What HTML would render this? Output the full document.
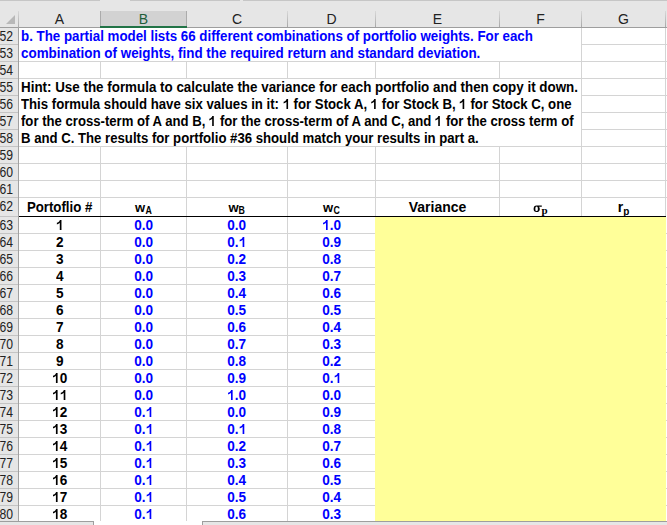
<!DOCTYPE html><html><head><meta charset="utf-8"><style>
html,body{margin:0;padding:0}
body{width:667px;height:525px;overflow:hidden;position:relative;background:#fff;font-family:'Liberation Sans', sans-serif}
.a{position:absolute}
.t{position:absolute;white-space:nowrap;font-weight:bold;font-size:14px;line-height:17px}
.c{text-align:center}
.bl{color:#0000ff}
.hd{position:absolute;font-size:14px;line-height:17px;color:#222;text-align:center}
.rh{position:absolute;font-size:14px;line-height:17px;color:#222;text-align:right}
</style></head><body>

<div class="a" style="left:0;top:0;width:667px;height:28px;background:#e6e6e6"></div>
<div class="a" style="left:0;top:0;width:667px;height:1px;background:#c6c6c6"></div>
<div class="a" style="left:100px;top:0;width:30px;height:1px;background:#e6e6e6"></div>
<div class="a" style="left:240px;top:0;width:3px;height:1px;background:#e6e6e6"></div>
<div class="a" style="left:0;top:28px;width:18px;height:497px;background:#e6e6e6"></div>
<div class="a" style="left:100px;top:11px;width:87px;height:15px;background:#d2d2d2;box-sizing:border-box;border-left:1px solid #ababab;border-right:1px solid #ababab"></div>
<div class="a" style="left:100px;top:26px;width:87px;height:2px;background:#217346"></div>
<div class="a" style="left:0;top:27px;width:100px;height:1px;background:#9e9e9e"></div>
<div class="a" style="left:187px;top:27px;width:480px;height:1px;background:#9e9e9e"></div>
<div class="a" style="left:287px;top:11px;width:1px;height:16px;background:linear-gradient(#d8d8d8,#a8a8a8)"></div>
<div class="a" style="left:375px;top:11px;width:1px;height:16px;background:linear-gradient(#d8d8d8,#a8a8a8)"></div>
<div class="a" style="left:499px;top:11px;width:1px;height:16px;background:linear-gradient(#d8d8d8,#a8a8a8)"></div>
<div class="a" style="left:581px;top:11px;width:1px;height:16px;background:linear-gradient(#d8d8d8,#a8a8a8)"></div>
<div class="a" style="left:665px;top:11px;width:1px;height:16px;background:linear-gradient(#d8d8d8,#a8a8a8)"></div>
<div class="a" style="left:18px;top:11px;width:1px;height:17px;background:linear-gradient(#d8d8d8,#a8a8a8)"></div>
<svg class="a" style="left:0;top:0" width="20" height="28"><polygon points="15,15 15,24 6,24" fill="#b8b8b8"/></svg>
<div class="hd" style="left:19px;top:11px;width:81px;color:#222">A</div>
<div class="hd" style="left:101px;top:11px;width:85px;color:#1e5e3a">B</div>
<div class="hd" style="left:187px;top:11px;width:100px;color:#222">C</div>
<div class="hd" style="left:288px;top:11px;width:87px;color:#222">D</div>
<div class="hd" style="left:376px;top:11px;width:123px;color:#222">E</div>
<div class="hd" style="left:500px;top:11px;width:81px;color:#222">F</div>
<div class="hd" style="left:582px;top:11px;width:83px;color:#222">G</div>
<div class="a" style="left:18px;top:28px;width:1px;height:497px;background:#a0a0a0"></div>
<div class="a" style="left:0;top:44px;width:18px;height:1px;background:#c4c4c4"></div>
<div class="rh" style="left:-21px;top:28px;width:34px;height:17px;transform:scaleX(0.87);transform-origin:right">52</div>
<div class="a" style="left:0;top:61px;width:18px;height:1px;background:#c4c4c4"></div>
<div class="rh" style="left:-21px;top:45px;width:34px;height:17px;transform:scaleX(0.87);transform-origin:right">53</div>
<div class="a" style="left:0;top:78px;width:18px;height:1px;background:#c4c4c4"></div>
<div class="rh" style="left:-21px;top:62px;width:34px;height:17px;transform:scaleX(0.87);transform-origin:right">54</div>
<div class="a" style="left:0;top:95px;width:18px;height:1px;background:#c4c4c4"></div>
<div class="rh" style="left:-21px;top:79px;width:34px;height:17px;transform:scaleX(0.87);transform-origin:right">55</div>
<div class="a" style="left:0;top:112px;width:18px;height:1px;background:#c4c4c4"></div>
<div class="rh" style="left:-21px;top:96px;width:34px;height:17px;transform:scaleX(0.87);transform-origin:right">56</div>
<div class="a" style="left:0;top:129px;width:18px;height:1px;background:#c4c4c4"></div>
<div class="rh" style="left:-21px;top:113px;width:34px;height:17px;transform:scaleX(0.87);transform-origin:right">57</div>
<div class="a" style="left:0;top:146px;width:18px;height:1px;background:#c4c4c4"></div>
<div class="rh" style="left:-21px;top:130px;width:34px;height:17px;transform:scaleX(0.87);transform-origin:right">58</div>
<div class="a" style="left:0;top:163px;width:18px;height:1px;background:#c4c4c4"></div>
<div class="rh" style="left:-21px;top:147px;width:34px;height:17px;transform:scaleX(0.87);transform-origin:right">59</div>
<div class="a" style="left:0;top:180px;width:18px;height:1px;background:#c4c4c4"></div>
<div class="rh" style="left:-21px;top:164px;width:34px;height:17px;transform:scaleX(0.87);transform-origin:right">60</div>
<div class="a" style="left:0;top:197px;width:18px;height:1px;background:#c4c4c4"></div>
<div class="rh" style="left:-21px;top:181px;width:34px;height:17px;transform:scaleX(0.87);transform-origin:right">61</div>
<div class="a" style="left:0;top:216px;width:18px;height:1px;background:#c4c4c4"></div>
<div class="rh" style="left:-21px;top:198px;width:34px;height:17px;transform:scaleX(0.87);transform-origin:right">62</div>
<div class="a" style="left:0;top:233px;width:18px;height:1px;background:#c4c4c4"></div>
<div class="rh" style="left:-21px;top:217px;width:34px;height:17px;transform:scaleX(0.87);transform-origin:right">63</div>
<div class="a" style="left:0;top:250px;width:18px;height:1px;background:#c4c4c4"></div>
<div class="rh" style="left:-21px;top:234px;width:34px;height:17px;transform:scaleX(0.87);transform-origin:right">64</div>
<div class="a" style="left:0;top:267px;width:18px;height:1px;background:#c4c4c4"></div>
<div class="rh" style="left:-21px;top:251px;width:34px;height:17px;transform:scaleX(0.87);transform-origin:right">65</div>
<div class="a" style="left:0;top:284px;width:18px;height:1px;background:#c4c4c4"></div>
<div class="rh" style="left:-21px;top:268px;width:34px;height:17px;transform:scaleX(0.87);transform-origin:right">66</div>
<div class="a" style="left:0;top:301px;width:18px;height:1px;background:#c4c4c4"></div>
<div class="rh" style="left:-21px;top:285px;width:34px;height:17px;transform:scaleX(0.87);transform-origin:right">67</div>
<div class="a" style="left:0;top:318px;width:18px;height:1px;background:#c4c4c4"></div>
<div class="rh" style="left:-21px;top:302px;width:34px;height:17px;transform:scaleX(0.87);transform-origin:right">68</div>
<div class="a" style="left:0;top:335px;width:18px;height:1px;background:#c4c4c4"></div>
<div class="rh" style="left:-21px;top:319px;width:34px;height:17px;transform:scaleX(0.87);transform-origin:right">69</div>
<div class="a" style="left:0;top:352px;width:18px;height:1px;background:#c4c4c4"></div>
<div class="rh" style="left:-21px;top:336px;width:34px;height:17px;transform:scaleX(0.87);transform-origin:right">70</div>
<div class="a" style="left:0;top:369px;width:18px;height:1px;background:#c4c4c4"></div>
<div class="rh" style="left:-21px;top:353px;width:34px;height:17px;transform:scaleX(0.87);transform-origin:right">71</div>
<div class="a" style="left:0;top:386px;width:18px;height:1px;background:#c4c4c4"></div>
<div class="rh" style="left:-21px;top:370px;width:34px;height:17px;transform:scaleX(0.87);transform-origin:right">72</div>
<div class="a" style="left:0;top:403px;width:18px;height:1px;background:#c4c4c4"></div>
<div class="rh" style="left:-21px;top:387px;width:34px;height:17px;transform:scaleX(0.87);transform-origin:right">73</div>
<div class="a" style="left:0;top:420px;width:18px;height:1px;background:#c4c4c4"></div>
<div class="rh" style="left:-21px;top:404px;width:34px;height:17px;transform:scaleX(0.87);transform-origin:right">74</div>
<div class="a" style="left:0;top:437px;width:18px;height:1px;background:#c4c4c4"></div>
<div class="rh" style="left:-21px;top:421px;width:34px;height:17px;transform:scaleX(0.87);transform-origin:right">75</div>
<div class="a" style="left:0;top:454px;width:18px;height:1px;background:#c4c4c4"></div>
<div class="rh" style="left:-21px;top:438px;width:34px;height:17px;transform:scaleX(0.87);transform-origin:right">76</div>
<div class="a" style="left:0;top:471px;width:18px;height:1px;background:#c4c4c4"></div>
<div class="rh" style="left:-21px;top:455px;width:34px;height:17px;transform:scaleX(0.87);transform-origin:right">77</div>
<div class="a" style="left:0;top:488px;width:18px;height:1px;background:#c4c4c4"></div>
<div class="rh" style="left:-21px;top:472px;width:34px;height:17px;transform:scaleX(0.87);transform-origin:right">78</div>
<div class="a" style="left:0;top:505px;width:18px;height:1px;background:#c4c4c4"></div>
<div class="rh" style="left:-21px;top:489px;width:34px;height:17px;transform:scaleX(0.87);transform-origin:right">79</div>
<div class="a" style="left:0;top:522px;width:18px;height:1px;background:#c4c4c4"></div>
<div class="rh" style="left:-21px;top:506px;width:34px;height:17px;transform:scaleX(0.87);transform-origin:right">80</div>
<div class="a" style="left:581px;top:44px;width:86px;height:1px;background:#d4d4d4"></div>
<div class="a" style="left:19px;top:61px;width:648px;height:1px;background:#d4d4d4"></div>
<div class="a" style="left:19px;top:78px;width:648px;height:1px;background:#d4d4d4"></div>
<div class="a" style="left:581px;top:95px;width:86px;height:1px;background:#d4d4d4"></div>
<div class="a" style="left:581px;top:112px;width:86px;height:1px;background:#d4d4d4"></div>
<div class="a" style="left:581px;top:129px;width:86px;height:1px;background:#d4d4d4"></div>
<div class="a" style="left:19px;top:146px;width:648px;height:1px;background:#d4d4d4"></div>
<div class="a" style="left:19px;top:163px;width:648px;height:1px;background:#d4d4d4"></div>
<div class="a" style="left:19px;top:180px;width:648px;height:1px;background:#d4d4d4"></div>
<div class="a" style="left:19px;top:197px;width:648px;height:1px;background:#d4d4d4"></div>
<div class="a" style="left:19px;top:233px;width:648px;height:1px;background:#d4d4d4"></div>
<div class="a" style="left:19px;top:250px;width:648px;height:1px;background:#d4d4d4"></div>
<div class="a" style="left:19px;top:267px;width:648px;height:1px;background:#d4d4d4"></div>
<div class="a" style="left:19px;top:284px;width:648px;height:1px;background:#d4d4d4"></div>
<div class="a" style="left:19px;top:301px;width:648px;height:1px;background:#d4d4d4"></div>
<div class="a" style="left:19px;top:318px;width:648px;height:1px;background:#d4d4d4"></div>
<div class="a" style="left:19px;top:335px;width:648px;height:1px;background:#d4d4d4"></div>
<div class="a" style="left:19px;top:352px;width:648px;height:1px;background:#d4d4d4"></div>
<div class="a" style="left:19px;top:369px;width:648px;height:1px;background:#d4d4d4"></div>
<div class="a" style="left:19px;top:386px;width:648px;height:1px;background:#d4d4d4"></div>
<div class="a" style="left:19px;top:403px;width:648px;height:1px;background:#d4d4d4"></div>
<div class="a" style="left:19px;top:420px;width:648px;height:1px;background:#d4d4d4"></div>
<div class="a" style="left:19px;top:437px;width:648px;height:1px;background:#d4d4d4"></div>
<div class="a" style="left:19px;top:454px;width:648px;height:1px;background:#d4d4d4"></div>
<div class="a" style="left:19px;top:471px;width:648px;height:1px;background:#d4d4d4"></div>
<div class="a" style="left:19px;top:488px;width:648px;height:1px;background:#d4d4d4"></div>
<div class="a" style="left:19px;top:505px;width:648px;height:1px;background:#d4d4d4"></div>
<div class="a" style="left:100px;top:61px;width:1px;height:18px;background:#d4d4d4"></div>
<div class="a" style="left:100px;top:146px;width:1px;height:375px;background:#d4d4d4"></div>
<div class="a" style="left:186px;top:61px;width:1px;height:18px;background:#d4d4d4"></div>
<div class="a" style="left:186px;top:146px;width:1px;height:375px;background:#d4d4d4"></div>
<div class="a" style="left:287px;top:61px;width:1px;height:18px;background:#d4d4d4"></div>
<div class="a" style="left:287px;top:146px;width:1px;height:375px;background:#d4d4d4"></div>
<div class="a" style="left:375px;top:61px;width:1px;height:18px;background:#d4d4d4"></div>
<div class="a" style="left:375px;top:146px;width:1px;height:375px;background:#d4d4d4"></div>
<div class="a" style="left:499px;top:61px;width:1px;height:18px;background:#d4d4d4"></div>
<div class="a" style="left:499px;top:146px;width:1px;height:375px;background:#d4d4d4"></div>
<div class="a" style="left:581px;top:28px;width:1px;height:493px;background:#d4d4d4"></div>
<div class="a" style="left:665px;top:28px;width:1px;height:493px;background:#d4d4d4"></div>
<div class="a" style="left:375px;top:217px;width:291px;height:304px;background:#ffff99"></div>
<div class="a" style="left:19px;top:216px;width:647px;height:1px;background:#000"></div>
<div class="t bl" style="left:21px;top:28px;"><span style="display:inline-block;transform:scaleX(0.951);transform-origin:left">b. The partial model lists 66 different combinations of portfolio weights. For each</span></div>
<div class="t bl" style="left:21px;top:45px;"><span style="display:inline-block;transform:scaleX(0.957);transform-origin:left">combination of weights, find the required return and standard deviation.</span></div>
<div class="t " style="left:21px;top:79px;"><span style="display:inline-block;transform:scaleX(0.956);transform-origin:left">Hint: Use the formula to calculate the variance for each portfolio and then copy it down.</span></div>
<div class="t " style="left:21px;top:96px;"><span style="display:inline-block;transform:scaleX(0.942);transform-origin:left">This formula should have six values in it: <svg style="display:inline-block;vertical-align:baseline" width="7.78" height="10.02" viewBox="0 0 1139 1466"><path d="M811 1466L557 1466L557 409L443 516L270 598L115 649L115 394L240 353L376 276L512 153L573 0L811 0Z" fill="currentColor"/></svg> for Stock A, <svg style="display:inline-block;vertical-align:baseline" width="7.78" height="10.02" viewBox="0 0 1139 1466"><path d="M811 1466L557 1466L557 409L443 516L270 598L115 649L115 394L240 353L376 276L512 153L573 0L811 0Z" fill="currentColor"/></svg> for Stock B, <svg style="display:inline-block;vertical-align:baseline" width="7.78" height="10.02" viewBox="0 0 1139 1466"><path d="M811 1466L557 1466L557 409L443 516L270 598L115 649L115 394L240 353L376 276L512 153L573 0L811 0Z" fill="currentColor"/></svg> for Stock C, one</span></div>
<div class="t " style="left:21px;top:113px;"><span style="display:inline-block;transform:scaleX(0.938);transform-origin:left">for the cross-term of A and B, <svg style="display:inline-block;vertical-align:baseline" width="7.78" height="10.02" viewBox="0 0 1139 1466"><path d="M811 1466L557 1466L557 409L443 516L270 598L115 649L115 394L240 353L376 276L512 153L573 0L811 0Z" fill="currentColor"/></svg> for the cross-term of A and C, and <svg style="display:inline-block;vertical-align:baseline" width="7.78" height="10.02" viewBox="0 0 1139 1466"><path d="M811 1466L557 1466L557 409L443 516L270 598L115 649L115 394L240 353L376 276L512 153L573 0L811 0Z" fill="currentColor"/></svg> for the cross term of</span></div>
<div class="t " style="left:21px;top:130px;"><span style="display:inline-block;transform:scaleX(0.94);transform-origin:left">B and C. The results for portfolio #36 should match your results in part a.</span></div>
<div class="t c" style="left:19px;top:199px;width:81px;"><span style="display:inline-block;transform:scaleX(0.945);transform-origin:center">Portoflio #</span></div>
<div class="t c" style="left:101px;top:199px;width:85px;"><span style="font-size:13px">w</span><span style="font-size:10px;position:relative;top:2px;display:inline-block;transform:scaleX(0.88);margin-left:-0.5px">A</span></div>
<div class="t c" style="left:187px;top:199px;width:100px;"><span style="font-size:13px">w</span><span style="font-size:10px;position:relative;top:2px;display:inline-block;transform:scaleX(0.88);margin-left:-0.5px">B</span></div>
<div class="t c" style="left:288px;top:199px;width:87px;"><span style="font-size:13px">w</span><span style="font-size:10px;position:relative;top:2px;display:inline-block;transform:scaleX(0.88);margin-left:-0.5px">C</span></div>
<div class="t c" style="left:376px;top:199px;width:123px;">Variance</div>
<div class="t c" style="left:500px;top:199px;width:81px;"><svg style="display:inline-block;vertical-align:baseline" width="9" height="7" viewBox="0 0 9 7"><path fill-rule="evenodd" d="M3.6 0.6 L8.8 0.6 L8.8 1.7 L5.9 1.7 Q6.8 2.5 6.8 3.9 Q6.8 7 3.5 7 Q0.6 7 0.6 4 Q0.6 0.6 3.6 0.6 Z M3.6 1.5 Q2.3 1.5 2.3 3.9 Q2.3 6.1 3.6 6.1 Q4.9 6.1 4.9 3.9 Q4.9 1.5 3.6 1.5 Z" fill="#000"/></svg><span style="font-family:'Liberation Serif',serif;font-size:11px;position:relative;top:1.5px;margin-left:-1px">p</span></div>
<div class="t c" style="left:582px;top:199px;width:83px;">r<span style="font-size:10px;position:relative;top:3px">p</span></div>
<div class="t c" style="left:19px;top:217px;width:81px;"><span style="display:inline-block;transform:scaleX(0.97);transform-origin:center"><svg style="display:inline-block;vertical-align:baseline" width="7.78" height="10.02" viewBox="0 0 1139 1466"><path d="M811 1466L557 1466L557 409L443 516L270 598L115 649L115 394L240 353L376 276L512 153L573 0L811 0Z" fill="currentColor"/></svg></span></div>
<div class="t c bl" style="left:101px;top:217px;width:85px;"><span style="display:inline-block;transform:scaleX(0.97);transform-origin:center">0.0</span></div>
<div class="t c bl" style="left:187px;top:217px;width:100px;"><span style="display:inline-block;transform:scaleX(0.97);transform-origin:center">0.0</span></div>
<div class="t c bl" style="left:288px;top:217px;width:87px;"><span style="display:inline-block;transform:scaleX(0.97);transform-origin:center"><svg style="display:inline-block;vertical-align:baseline" width="7.78" height="10.02" viewBox="0 0 1139 1466"><path d="M811 1466L557 1466L557 409L443 516L270 598L115 649L115 394L240 353L376 276L512 153L573 0L811 0Z" fill="currentColor"/></svg>.0</span></div>
<div class="t c" style="left:19px;top:234px;width:81px;"><span style="display:inline-block;transform:scaleX(0.97);transform-origin:center">2</span></div>
<div class="t c bl" style="left:101px;top:234px;width:85px;"><span style="display:inline-block;transform:scaleX(0.97);transform-origin:center">0.0</span></div>
<div class="t c bl" style="left:187px;top:234px;width:100px;"><span style="display:inline-block;transform:scaleX(0.97);transform-origin:center">0.<svg style="display:inline-block;vertical-align:baseline" width="7.78" height="10.02" viewBox="0 0 1139 1466"><path d="M811 1466L557 1466L557 409L443 516L270 598L115 649L115 394L240 353L376 276L512 153L573 0L811 0Z" fill="currentColor"/></svg></span></div>
<div class="t c bl" style="left:288px;top:234px;width:87px;"><span style="display:inline-block;transform:scaleX(0.97);transform-origin:center">0.9</span></div>
<div class="t c" style="left:19px;top:251px;width:81px;"><span style="display:inline-block;transform:scaleX(0.97);transform-origin:center">3</span></div>
<div class="t c bl" style="left:101px;top:251px;width:85px;"><span style="display:inline-block;transform:scaleX(0.97);transform-origin:center">0.0</span></div>
<div class="t c bl" style="left:187px;top:251px;width:100px;"><span style="display:inline-block;transform:scaleX(0.97);transform-origin:center">0.2</span></div>
<div class="t c bl" style="left:288px;top:251px;width:87px;"><span style="display:inline-block;transform:scaleX(0.97);transform-origin:center">0.8</span></div>
<div class="t c" style="left:19px;top:268px;width:81px;"><span style="display:inline-block;transform:scaleX(0.97);transform-origin:center">4</span></div>
<div class="t c bl" style="left:101px;top:268px;width:85px;"><span style="display:inline-block;transform:scaleX(0.97);transform-origin:center">0.0</span></div>
<div class="t c bl" style="left:187px;top:268px;width:100px;"><span style="display:inline-block;transform:scaleX(0.97);transform-origin:center">0.3</span></div>
<div class="t c bl" style="left:288px;top:268px;width:87px;"><span style="display:inline-block;transform:scaleX(0.97);transform-origin:center">0.7</span></div>
<div class="t c" style="left:19px;top:285px;width:81px;"><span style="display:inline-block;transform:scaleX(0.97);transform-origin:center">5</span></div>
<div class="t c bl" style="left:101px;top:285px;width:85px;"><span style="display:inline-block;transform:scaleX(0.97);transform-origin:center">0.0</span></div>
<div class="t c bl" style="left:187px;top:285px;width:100px;"><span style="display:inline-block;transform:scaleX(0.97);transform-origin:center">0.4</span></div>
<div class="t c bl" style="left:288px;top:285px;width:87px;"><span style="display:inline-block;transform:scaleX(0.97);transform-origin:center">0.6</span></div>
<div class="t c" style="left:19px;top:302px;width:81px;"><span style="display:inline-block;transform:scaleX(0.97);transform-origin:center">6</span></div>
<div class="t c bl" style="left:101px;top:302px;width:85px;"><span style="display:inline-block;transform:scaleX(0.97);transform-origin:center">0.0</span></div>
<div class="t c bl" style="left:187px;top:302px;width:100px;"><span style="display:inline-block;transform:scaleX(0.97);transform-origin:center">0.5</span></div>
<div class="t c bl" style="left:288px;top:302px;width:87px;"><span style="display:inline-block;transform:scaleX(0.97);transform-origin:center">0.5</span></div>
<div class="t c" style="left:19px;top:319px;width:81px;"><span style="display:inline-block;transform:scaleX(0.97);transform-origin:center">7</span></div>
<div class="t c bl" style="left:101px;top:319px;width:85px;"><span style="display:inline-block;transform:scaleX(0.97);transform-origin:center">0.0</span></div>
<div class="t c bl" style="left:187px;top:319px;width:100px;"><span style="display:inline-block;transform:scaleX(0.97);transform-origin:center">0.6</span></div>
<div class="t c bl" style="left:288px;top:319px;width:87px;"><span style="display:inline-block;transform:scaleX(0.97);transform-origin:center">0.4</span></div>
<div class="t c" style="left:19px;top:336px;width:81px;"><span style="display:inline-block;transform:scaleX(0.97);transform-origin:center">8</span></div>
<div class="t c bl" style="left:101px;top:336px;width:85px;"><span style="display:inline-block;transform:scaleX(0.97);transform-origin:center">0.0</span></div>
<div class="t c bl" style="left:187px;top:336px;width:100px;"><span style="display:inline-block;transform:scaleX(0.97);transform-origin:center">0.7</span></div>
<div class="t c bl" style="left:288px;top:336px;width:87px;"><span style="display:inline-block;transform:scaleX(0.97);transform-origin:center">0.3</span></div>
<div class="t c" style="left:19px;top:353px;width:81px;"><span style="display:inline-block;transform:scaleX(0.97);transform-origin:center">9</span></div>
<div class="t c bl" style="left:101px;top:353px;width:85px;"><span style="display:inline-block;transform:scaleX(0.97);transform-origin:center">0.0</span></div>
<div class="t c bl" style="left:187px;top:353px;width:100px;"><span style="display:inline-block;transform:scaleX(0.97);transform-origin:center">0.8</span></div>
<div class="t c bl" style="left:288px;top:353px;width:87px;"><span style="display:inline-block;transform:scaleX(0.97);transform-origin:center">0.2</span></div>
<div class="t c" style="left:19px;top:370px;width:81px;"><span style="display:inline-block;transform:scaleX(0.97);transform-origin:center"><svg style="display:inline-block;vertical-align:baseline" width="7.78" height="10.02" viewBox="0 0 1139 1466"><path d="M811 1466L557 1466L557 409L443 516L270 598L115 649L115 394L240 353L376 276L512 153L573 0L811 0Z" fill="currentColor"/></svg>0</span></div>
<div class="t c bl" style="left:101px;top:370px;width:85px;"><span style="display:inline-block;transform:scaleX(0.97);transform-origin:center">0.0</span></div>
<div class="t c bl" style="left:187px;top:370px;width:100px;"><span style="display:inline-block;transform:scaleX(0.97);transform-origin:center">0.9</span></div>
<div class="t c bl" style="left:288px;top:370px;width:87px;"><span style="display:inline-block;transform:scaleX(0.97);transform-origin:center">0.<svg style="display:inline-block;vertical-align:baseline" width="7.78" height="10.02" viewBox="0 0 1139 1466"><path d="M811 1466L557 1466L557 409L443 516L270 598L115 649L115 394L240 353L376 276L512 153L573 0L811 0Z" fill="currentColor"/></svg></span></div>
<div class="t c" style="left:19px;top:387px;width:81px;"><span style="display:inline-block;transform:scaleX(0.97);transform-origin:center"><svg style="display:inline-block;vertical-align:baseline" width="7.78" height="10.02" viewBox="0 0 1139 1466"><path d="M811 1466L557 1466L557 409L443 516L270 598L115 649L115 394L240 353L376 276L512 153L573 0L811 0Z" fill="currentColor"/></svg><svg style="display:inline-block;vertical-align:baseline" width="7.78" height="10.02" viewBox="0 0 1139 1466"><path d="M811 1466L557 1466L557 409L443 516L270 598L115 649L115 394L240 353L376 276L512 153L573 0L811 0Z" fill="currentColor"/></svg></span></div>
<div class="t c bl" style="left:101px;top:387px;width:85px;"><span style="display:inline-block;transform:scaleX(0.97);transform-origin:center">0.0</span></div>
<div class="t c bl" style="left:187px;top:387px;width:100px;"><span style="display:inline-block;transform:scaleX(0.97);transform-origin:center"><svg style="display:inline-block;vertical-align:baseline" width="7.78" height="10.02" viewBox="0 0 1139 1466"><path d="M811 1466L557 1466L557 409L443 516L270 598L115 649L115 394L240 353L376 276L512 153L573 0L811 0Z" fill="currentColor"/></svg>.0</span></div>
<div class="t c bl" style="left:288px;top:387px;width:87px;"><span style="display:inline-block;transform:scaleX(0.97);transform-origin:center">0.0</span></div>
<div class="t c" style="left:19px;top:404px;width:81px;"><span style="display:inline-block;transform:scaleX(0.97);transform-origin:center"><svg style="display:inline-block;vertical-align:baseline" width="7.78" height="10.02" viewBox="0 0 1139 1466"><path d="M811 1466L557 1466L557 409L443 516L270 598L115 649L115 394L240 353L376 276L512 153L573 0L811 0Z" fill="currentColor"/></svg>2</span></div>
<div class="t c bl" style="left:101px;top:404px;width:85px;"><span style="display:inline-block;transform:scaleX(0.97);transform-origin:center">0.<svg style="display:inline-block;vertical-align:baseline" width="7.78" height="10.02" viewBox="0 0 1139 1466"><path d="M811 1466L557 1466L557 409L443 516L270 598L115 649L115 394L240 353L376 276L512 153L573 0L811 0Z" fill="currentColor"/></svg></span></div>
<div class="t c bl" style="left:187px;top:404px;width:100px;"><span style="display:inline-block;transform:scaleX(0.97);transform-origin:center">0.0</span></div>
<div class="t c bl" style="left:288px;top:404px;width:87px;"><span style="display:inline-block;transform:scaleX(0.97);transform-origin:center">0.9</span></div>
<div class="t c" style="left:19px;top:421px;width:81px;"><span style="display:inline-block;transform:scaleX(0.97);transform-origin:center"><svg style="display:inline-block;vertical-align:baseline" width="7.78" height="10.02" viewBox="0 0 1139 1466"><path d="M811 1466L557 1466L557 409L443 516L270 598L115 649L115 394L240 353L376 276L512 153L573 0L811 0Z" fill="currentColor"/></svg>3</span></div>
<div class="t c bl" style="left:101px;top:421px;width:85px;"><span style="display:inline-block;transform:scaleX(0.97);transform-origin:center">0.<svg style="display:inline-block;vertical-align:baseline" width="7.78" height="10.02" viewBox="0 0 1139 1466"><path d="M811 1466L557 1466L557 409L443 516L270 598L115 649L115 394L240 353L376 276L512 153L573 0L811 0Z" fill="currentColor"/></svg></span></div>
<div class="t c bl" style="left:187px;top:421px;width:100px;"><span style="display:inline-block;transform:scaleX(0.97);transform-origin:center">0.<svg style="display:inline-block;vertical-align:baseline" width="7.78" height="10.02" viewBox="0 0 1139 1466"><path d="M811 1466L557 1466L557 409L443 516L270 598L115 649L115 394L240 353L376 276L512 153L573 0L811 0Z" fill="currentColor"/></svg></span></div>
<div class="t c bl" style="left:288px;top:421px;width:87px;"><span style="display:inline-block;transform:scaleX(0.97);transform-origin:center">0.8</span></div>
<div class="t c" style="left:19px;top:438px;width:81px;"><span style="display:inline-block;transform:scaleX(0.97);transform-origin:center"><svg style="display:inline-block;vertical-align:baseline" width="7.78" height="10.02" viewBox="0 0 1139 1466"><path d="M811 1466L557 1466L557 409L443 516L270 598L115 649L115 394L240 353L376 276L512 153L573 0L811 0Z" fill="currentColor"/></svg>4</span></div>
<div class="t c bl" style="left:101px;top:438px;width:85px;"><span style="display:inline-block;transform:scaleX(0.97);transform-origin:center">0.<svg style="display:inline-block;vertical-align:baseline" width="7.78" height="10.02" viewBox="0 0 1139 1466"><path d="M811 1466L557 1466L557 409L443 516L270 598L115 649L115 394L240 353L376 276L512 153L573 0L811 0Z" fill="currentColor"/></svg></span></div>
<div class="t c bl" style="left:187px;top:438px;width:100px;"><span style="display:inline-block;transform:scaleX(0.97);transform-origin:center">0.2</span></div>
<div class="t c bl" style="left:288px;top:438px;width:87px;"><span style="display:inline-block;transform:scaleX(0.97);transform-origin:center">0.7</span></div>
<div class="t c" style="left:19px;top:455px;width:81px;"><span style="display:inline-block;transform:scaleX(0.97);transform-origin:center"><svg style="display:inline-block;vertical-align:baseline" width="7.78" height="10.02" viewBox="0 0 1139 1466"><path d="M811 1466L557 1466L557 409L443 516L270 598L115 649L115 394L240 353L376 276L512 153L573 0L811 0Z" fill="currentColor"/></svg>5</span></div>
<div class="t c bl" style="left:101px;top:455px;width:85px;"><span style="display:inline-block;transform:scaleX(0.97);transform-origin:center">0.<svg style="display:inline-block;vertical-align:baseline" width="7.78" height="10.02" viewBox="0 0 1139 1466"><path d="M811 1466L557 1466L557 409L443 516L270 598L115 649L115 394L240 353L376 276L512 153L573 0L811 0Z" fill="currentColor"/></svg></span></div>
<div class="t c bl" style="left:187px;top:455px;width:100px;"><span style="display:inline-block;transform:scaleX(0.97);transform-origin:center">0.3</span></div>
<div class="t c bl" style="left:288px;top:455px;width:87px;"><span style="display:inline-block;transform:scaleX(0.97);transform-origin:center">0.6</span></div>
<div class="t c" style="left:19px;top:472px;width:81px;"><span style="display:inline-block;transform:scaleX(0.97);transform-origin:center"><svg style="display:inline-block;vertical-align:baseline" width="7.78" height="10.02" viewBox="0 0 1139 1466"><path d="M811 1466L557 1466L557 409L443 516L270 598L115 649L115 394L240 353L376 276L512 153L573 0L811 0Z" fill="currentColor"/></svg>6</span></div>
<div class="t c bl" style="left:101px;top:472px;width:85px;"><span style="display:inline-block;transform:scaleX(0.97);transform-origin:center">0.<svg style="display:inline-block;vertical-align:baseline" width="7.78" height="10.02" viewBox="0 0 1139 1466"><path d="M811 1466L557 1466L557 409L443 516L270 598L115 649L115 394L240 353L376 276L512 153L573 0L811 0Z" fill="currentColor"/></svg></span></div>
<div class="t c bl" style="left:187px;top:472px;width:100px;"><span style="display:inline-block;transform:scaleX(0.97);transform-origin:center">0.4</span></div>
<div class="t c bl" style="left:288px;top:472px;width:87px;"><span style="display:inline-block;transform:scaleX(0.97);transform-origin:center">0.5</span></div>
<div class="t c" style="left:19px;top:489px;width:81px;"><span style="display:inline-block;transform:scaleX(0.97);transform-origin:center"><svg style="display:inline-block;vertical-align:baseline" width="7.78" height="10.02" viewBox="0 0 1139 1466"><path d="M811 1466L557 1466L557 409L443 516L270 598L115 649L115 394L240 353L376 276L512 153L573 0L811 0Z" fill="currentColor"/></svg>7</span></div>
<div class="t c bl" style="left:101px;top:489px;width:85px;"><span style="display:inline-block;transform:scaleX(0.97);transform-origin:center">0.<svg style="display:inline-block;vertical-align:baseline" width="7.78" height="10.02" viewBox="0 0 1139 1466"><path d="M811 1466L557 1466L557 409L443 516L270 598L115 649L115 394L240 353L376 276L512 153L573 0L811 0Z" fill="currentColor"/></svg></span></div>
<div class="t c bl" style="left:187px;top:489px;width:100px;"><span style="display:inline-block;transform:scaleX(0.97);transform-origin:center">0.5</span></div>
<div class="t c bl" style="left:288px;top:489px;width:87px;"><span style="display:inline-block;transform:scaleX(0.97);transform-origin:center">0.4</span></div>
<div class="t c" style="left:19px;top:506px;width:81px;"><span style="display:inline-block;transform:scaleX(0.97);transform-origin:center"><svg style="display:inline-block;vertical-align:baseline" width="7.78" height="10.02" viewBox="0 0 1139 1466"><path d="M811 1466L557 1466L557 409L443 516L270 598L115 649L115 394L240 353L376 276L512 153L573 0L811 0Z" fill="currentColor"/></svg>8</span></div>
<div class="t c bl" style="left:101px;top:506px;width:85px;"><span style="display:inline-block;transform:scaleX(0.97);transform-origin:center">0.<svg style="display:inline-block;vertical-align:baseline" width="7.78" height="10.02" viewBox="0 0 1139 1466"><path d="M811 1466L557 1466L557 409L443 516L270 598L115 649L115 394L240 353L376 276L512 153L573 0L811 0Z" fill="currentColor"/></svg></span></div>
<div class="t c bl" style="left:187px;top:506px;width:100px;"><span style="display:inline-block;transform:scaleX(0.97);transform-origin:center">0.6</span></div>
<div class="t c bl" style="left:288px;top:506px;width:87px;"><span style="display:inline-block;transform:scaleX(0.97);transform-origin:center">0.3</span></div>
<div class="a" style="left:0;top:521px;width:667px;height:4px;background:#e6e6e6"></div>
<div class="a" style="left:0;top:521px;width:94px;height:1px;background:#9e9e9e"></div>
<div class="a" style="left:93px;top:521px;width:1px;height:4px;background:#9e9e9e"></div>
<div class="a" style="left:94px;top:521px;width:108px;height:4px;background:#fff"></div>
<div class="a" style="left:202px;top:521px;width:465px;height:1px;background:#9e9e9e"></div>
<div class="a" style="left:202px;top:521px;width:1px;height:4px;background:#9e9e9e"></div>
</body></html>
